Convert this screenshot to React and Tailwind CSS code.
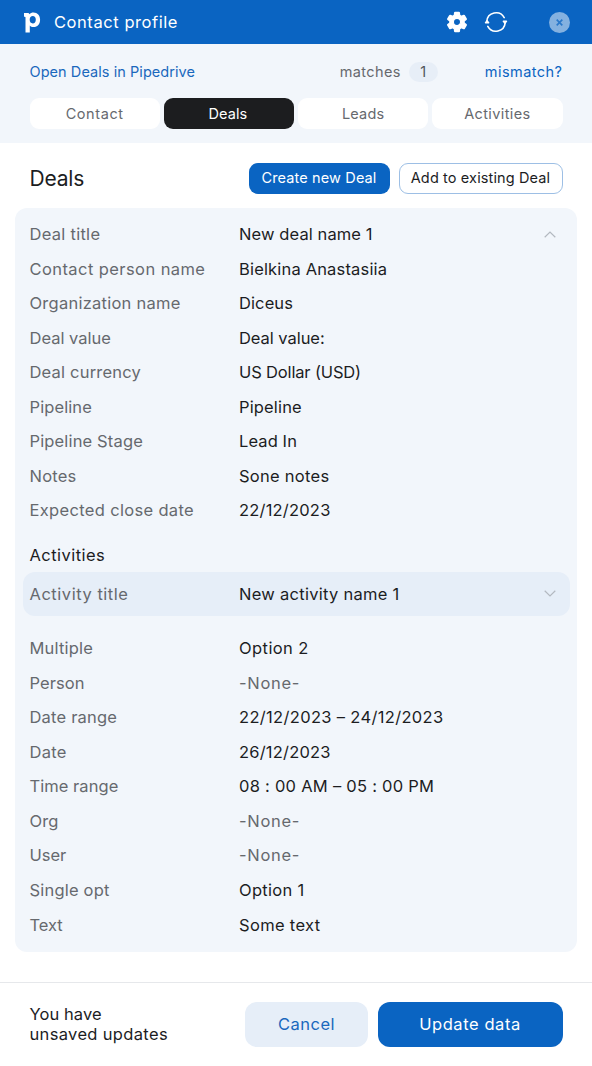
import React from 'react';
import clsx from 'clsx';

const tabs = [
  { name: 'Contact', style: 'tracking-[0.58px]' },
  { name: 'Deals', style: 'tracking-[0.05px] pr-[9px]' },
  { name: 'Leads', style: 'tracking-[0.2px]' },
  { name: 'Activities', style: 'tracking-[0.38px]' },
];

const dealFields = [
  { label: 'Deal title', value: 'New deal name 1', open: true, labelStyle: 'tracking-[0.28px]', valueStyle: 'tracking-[0.1px]' },
  { label: 'Contact person name', value: 'Bielkina Anastasiia', labelStyle: 'tracking-[0.42px]', valueStyle: 'tracking-[0.17px]' },
  { label: 'Organization name', value: 'Diceus', labelStyle: 'tracking-[0.25px]', valueStyle: 'tracking-[0.1px]' },
  { label: 'Deal value', value: 'Deal value:', labelStyle: 'tracking-normal', valueStyle: 'tracking-[-0.05px]' },
  { label: 'Deal currency', value: 'US Dollar (USD)', labelStyle: 'tracking-[0.2px]', valueStyle: 'tracking-[-0.15px]' },
  { label: 'Pipeline', value: 'Pipeline', labelStyle: 'tracking-[0.1px]', valueStyle: 'tracking-[0.15px]' },
  { label: 'Pipeline Stage', value: 'Lead In', labelStyle: 'tracking-[0.15px]', valueStyle: 'tracking-[0.1px]' },
  { label: 'Notes', value: 'Sone notes', labelStyle: 'tracking-[0.2px]', valueStyle: 'tracking-[0.27px]' },
  { label: 'Expected close date', value: '22/12/2023', labelStyle: 'tracking-[0.33px]', valueStyle: 'tracking-[0.2px]' },
];

const activityFields = [
  { label: 'Multiple', value: 'Option 2', labelStyle: 'tracking-[0.2px]', valueStyle: 'tracking-[0.42px]' },
  { label: 'Person', value: '-None-', empty: true, labelStyle: 'tracking-[0.05px]', valueStyle: 'tracking-[0.7px]' },
  { label: 'Date range', value: '22/12/2023 – 24/12/2023', labelStyle: 'tracking-[0.2px]', valueStyle: 'tracking-[0.33px]' },
  { label: 'Date', value: '26/12/2023', labelStyle: 'tracking-[0.3px]', valueStyle: 'tracking-[0.2px]' },
  { label: 'Time range', value: '08 : 00 AM – 05 : 00 PM', labelStyle: 'tracking-[0.05px]', valueStyle: 'tracking-[0.26px]' },
  { label: 'Org', value: '-None-', empty: true, labelStyle: 'tracking-[0.1px]', valueStyle: 'tracking-[0.7px]' },
  { label: 'User', value: '-None-', empty: true, labelStyle: 'tracking-normal', valueStyle: 'tracking-[0.7px]' },
  { label: 'Single opt', value: 'Option 1', labelStyle: 'tracking-[0.2px]', valueStyle: 'tracking-[0.3px]' },
  { label: 'Text', value: 'Some text', labelStyle: 'tracking-[-0.1px]', valueStyle: 'tracking-[0.33px]' },
];

function Chevron({ up }) {
  return (
    <svg viewBox="0 0 12 7" className={clsx('w-3 h-[7px]', up && 'rotate-180')} fill="none" stroke="#b3b9c0" strokeWidth="1.2">
      <path d="M0.7 0.8 L6 6 L11.3 0.8" />
    </svg>
  );
}

function FieldRow({ label, value, empty, open, labelStyle, valueStyle }) {
  return (
    <div className="flex items-center h-[34.56px] pl-[14.5px] pr-[21px]">
      <span className={clsx('w-[209.5px] text-[#66696e]', labelStyle)}>{label}</span>
      <span className={clsx('flex-1', empty ? 'text-[#66696e]' : 'text-[#1c1d1f]', valueStyle)}>{value}</span>
      {open && <Chevron up />}
    </div>
  );
}

function Header() {
  return (
    <header className="h-11 bg-[#0a64c2] flex items-center text-white pl-6 pr-[22px]">
      <svg viewBox="0 0 17 21" className="w-[17px] h-[21px]" fill="white">
        <path
          fillRule="evenodd"
          d="M0 0.9 H3.6 C4.6 0.9 5.2 1.4 5.4 2.2 C6.4 1 7.8 0.4 9.5 0.4 C13.4 0.4 16.1 3.4 16.1 7.7 C16.1 12.1 13.4 15.1 9.6 15.1 C7.9 15.1 6.6 14.5 5.8 13.5 V20.6 H1.5 V5.5 C1.5 5 1.3 4.8 0.8 4.8 H0 Z M8.8 4.1 C6.9 4.1 5.7 5.4 5.7 7.8 C5.7 10 6.9 11.4 8.8 11.4 C10.6 11.4 11.8 9.9 11.8 7.7 C11.8 5.5 10.6 4.1 8.8 4.1 Z"
        />
      </svg>
      <h1 className="ml-[13px] flex-1 text-[16.5px] tracking-[0.56px]">Contact profile</h1>
      <svg viewBox="0 0 24 24" className="w-6 h-6" fill="white" stroke="white" strokeWidth="1.2" strokeLinejoin="round">
        <path d="M19.14 12.94c.04-.3.06-.61.06-.94 0-.32-.02-.64-.07-.94l2.03-1.58a.49.49 0 0 0 .12-.61l-1.92-3.32a.488.488 0 0 0-.59-.22l-2.39.96c-.5-.38-1.03-.7-1.62-.94l-.36-2.54a.484.484 0 0 0-.48-.41h-3.84c-.24 0-.43.17-.47.41l-.36 2.54c-.59.24-1.13.57-1.62.94l-2.39-.96c-.22-.08-.47 0-.59.22L2.74 8.87c-.12.21-.08.47.12.61l2.03 1.58c-.05.3-.09.63-.09.94s.02.64.07.94l-2.03 1.58a.49.49 0 0 0-.12.61l1.92 3.32c.12.22.37.29.59.22l2.39-.96c.5.38 1.03.7 1.62.94l.36 2.54c.05.24.24.41.48.41h3.84c.24 0 .44-.17.47-.41l.36-2.54c.59-.24 1.13-.56 1.62-.94l2.39.96c.22.08.47 0 .59-.22l1.92-3.32c.12-.22.07-.47-.12-.61l-2.01-1.58zM12 15.6A3.6 3.6 0 1 1 12 8.4a3.6 3.6 0 0 1 0 7.2z" />
      </svg>
      <svg viewBox="0 0 24 22" className="ml-[15px] w-6 h-[22px]" fill="none" stroke="white" strokeWidth="1.6" strokeLinecap="round">
        <path d="M2.8 10.5 A9.3 9.3 0 0 1 20.2 6.6" />
        <path d="M21.2 11.5 A9.3 9.3 0 0 1 3.8 15.4" />
        <path d="M1.6 11.7 L3 9.9 L4.6 11.7 Z M22.4 10.3 L21 12.1 L19.4 10.3 Z" fill="white" strokeLinejoin="round" />
      </svg>
      <span className="ml-[41px] w-[21px] h-[21px] rounded-full bg-[#84b1e0] flex items-center justify-center">
        <svg viewBox="0 0 8 8" className="w-[7px] h-[7px]" stroke="#2a78ca" strokeWidth="1.9">
          <path d="M0.8 0.8 L7.2 7.2 M7.2 0.8 L0.8 7.2" />
        </svg>
      </span>
    </header>
  );
}

export default function App() {
  return (
    <div className="w-[592px] h-[1066px] overflow-hidden bg-white flex flex-col font-[Inter,sans-serif] text-[16.5px] leading-5 text-[#1c1d1f] whitespace-nowrap">
      <Header />

      <section className="h-[99px] bg-[#f2f6fb] px-[29.5px] pt-[18px]">
        <div className="flex items-center h-5 text-[14.5px]">
          <a className="text-[#1a68bd] tracking-[0.06px]">Open Deals in Pipedrive</a>
          <span className="ml-auto text-[#66696e] tracking-[0.38px]">matches</span>
          <span className="ml-2 w-[29px] h-5 rounded-full bg-[#e7eef7] text-[#4f545b] text-center">1</span>
          <a className="ml-[47px] text-[#0a64c2] tracking-[0.46px]">mismatch?</a>
        </div>
        <nav className="mt-4 grid grid-cols-4 gap-1">
          {tabs.map((tab) => (
            <button
              key={tab.name}
              className={clsx(
                'h-[31px] rounded-[9px] text-[14.5px]',
                tab.name === 'Deals' ? 'tracking-[0.05px] pr-[2px]' : tab.style,
                tab.name === 'Deals' ? 'bg-[#1c1d1f] text-white' : 'bg-white text-[#66696e]'
              )}
            >
              {tab.name}
            </button>
          ))}
        </nav>
      </section>

      <div className="flex items-center h-[64.5px] pt-[6px] px-[29.5px] text-[14.5px]">
        <h2 className="flex-1 pt-px text-[21px] tracking-[-0.2px]">Deals</h2>
        <button className="w-[141px] h-[31px] rounded-[9px] bg-[#0a64c2] text-white tracking-[0.13px]">Create new Deal</button>
        <button className="ml-[9px] w-[164px] h-[31px] rounded-[9px] border border-[#9dbfe5] tracking-[0.13px]">Add to existing Deal</button>
      </div>

      <main className="mx-[15px] h-[744.5px] rounded-xl bg-[#f2f6fb] pt-[9.3px]">
        {dealFields.map((field) => (
          <FieldRow key={field.label} {...field} />
        ))}
        <h3 className="mt-[17px] pl-[14.5px] tracking-[0.45px]">Activities</h3>
        <div className="mt-[7.2px] mx-[7.5px] h-[44px] rounded-xl bg-[#e6eef8] flex items-center pl-[7px] pr-[13.5px]">
          <span className="w-[209.5px] text-[#66696e] tracking-[0.53px]">Activity title</span>
          <span className="flex-1 tracking-[0.27px]">New activity name 1</span>
          <Chevron />
        </div>
        <div className="mt-[15px]">
          {activityFields.map((field) => (
            <FieldRow key={field.label} {...field} />
          ))}
        </div>
      </main>

      <footer className="mt-[30px] flex-1 border-t border-[#e6e8eb] flex items-start pt-[19px] px-[29.5px]">
        <p className="flex-1 pt-[2px]">
          <span className="tracking-[0.07px]">You have</span>
          <br />
          <span className="tracking-[0.34px]">unsaved updates</span>
        </p>
        <button className="w-[123px] h-[45px] pb-[2px] rounded-xl bg-[#e6eef8] text-[#1a68bd] tracking-[0.45px]">Cancel</button>
        <button className="ml-[9.5px] w-[185px] h-[45px] pb-[2px] rounded-xl bg-[#0a64c2] text-white tracking-[0.57px]">Update data</button>
      </footer>
    </div>
  );
}
